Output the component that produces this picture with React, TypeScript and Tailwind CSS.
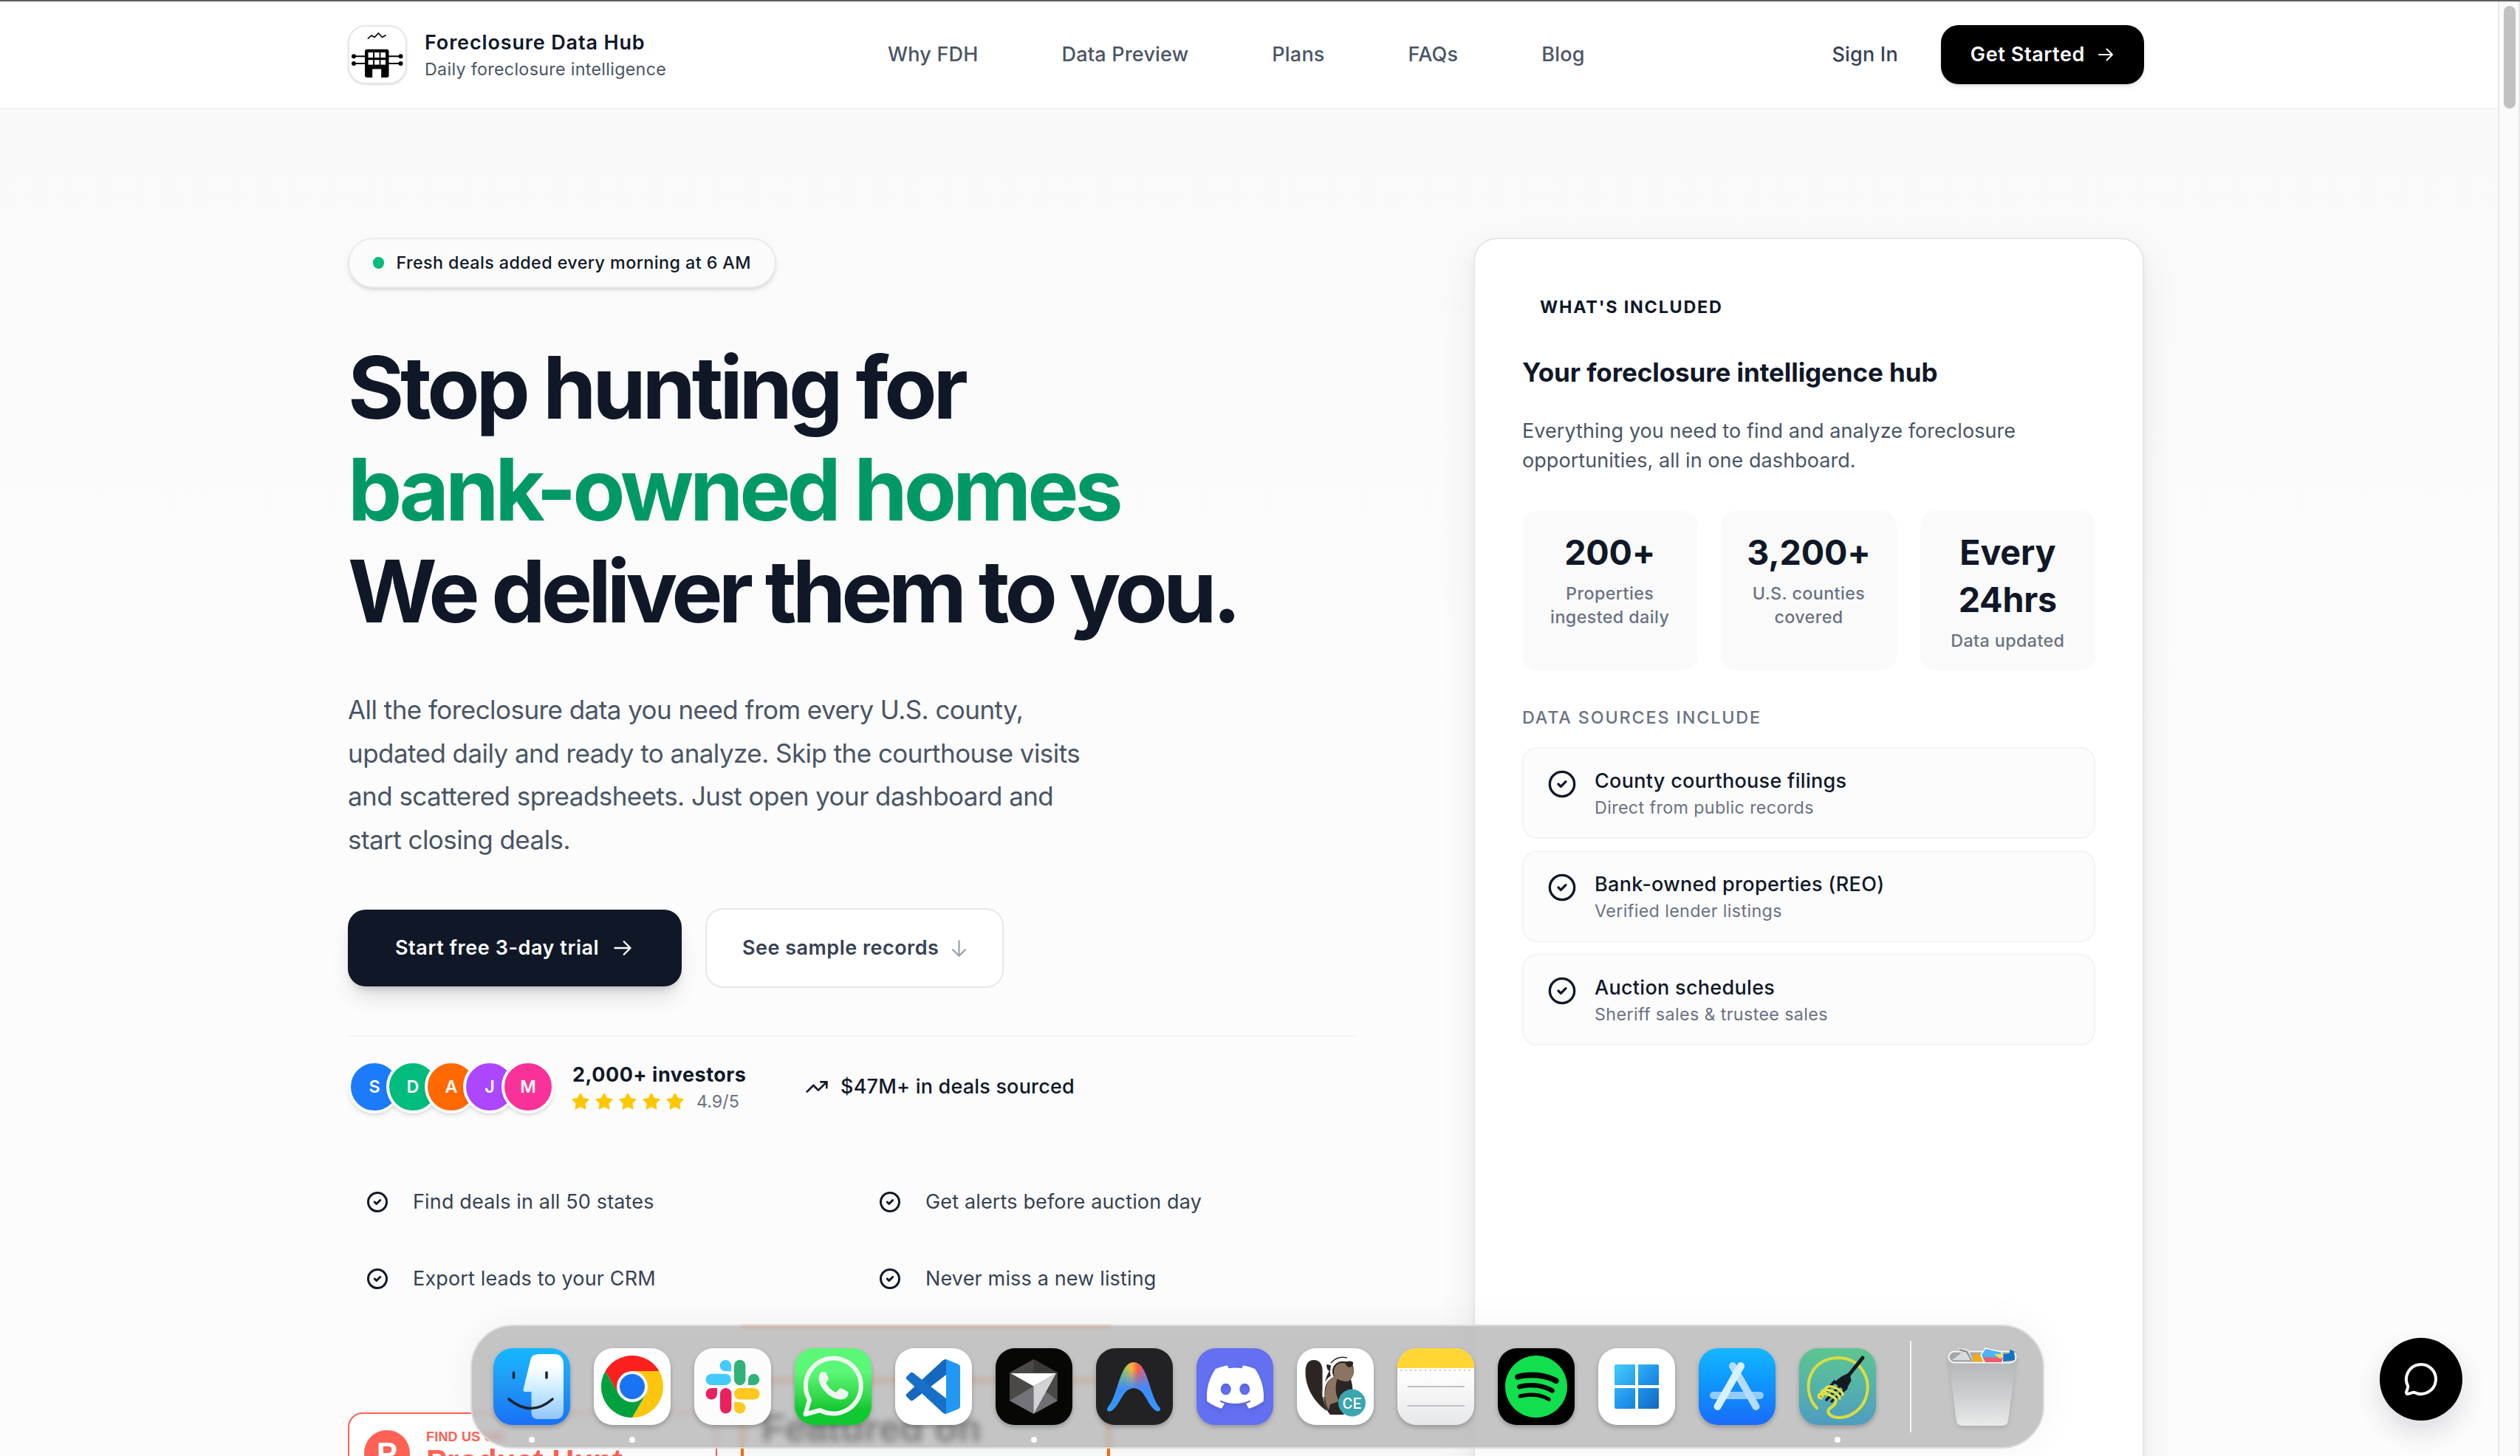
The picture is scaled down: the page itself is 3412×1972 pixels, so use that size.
import { ReactNode } from "react";
import { CircleCheck, MessageCircle, Star, TrendingUp } from "lucide-react";
import { SiDiscord, SiSpotify } from "react-icons/si";

const navLinks = ["Why FDH", "Data Preview", "Plans", "FAQs", "Blog"];

const investors = [
  { initial: "S", color: "bg-[#1b7bfb]" },
  { initial: "D", color: "bg-[#00bc7d]" },
  { initial: "A", color: "bg-[#ff6900]" },
  { initial: "J", color: "bg-[#ad46ff]" },
  { initial: "M", color: "bg-[#f93299]" },
];

const features = [
  "Find deals in all 50 states",
  "Get alerts before auction day",
  "Export leads to your CRM",
  "Never miss a new listing",
];

const stats = [
  { value: "200+", label: "Properties ingested daily" },
  { value: "3,200+", label: "U.S. counties covered" },
  { value: "Every 24hrs", label: "Data updated" },
];

const sources = [
  { title: "County courthouse filings", description: "Direct from public records" },
  { title: "Bank-owned properties (REO)", description: "Verified lender listings" },
  { title: "Auction schedules", description: "Sheriff sales & trustee sales" },
];

const Arrow = ({ className }: { className?: string }) => (
  <svg
    viewBox="0 0 24 24"
    fill="none"
    stroke="currentColor"
    strokeWidth="2"
    strokeLinecap="round"
    strokeLinejoin="round"
    className={className}
  >
    <path d="M13.5 4.5 21 12l-7.5 7.5M21 12H3" />
  </svg>
);

const Logo = () => (
  <div className="size-20 shrink-0 rounded-3xl border-2 border-gray-200 bg-white shadow-sm">
    <svg viewBox="2 2 76 76" className="size-full">
      <path d="M26.8 18.7 32 14l4 2.5L41.5 11l5 5.5 5.1-3" fill="none" stroke="#000" strokeWidth="1.6" />
      <path d="M8 42.3h62.5M8 52h62.5" stroke="#000" strokeWidth="2" />
      <circle cx="8" cy="42.3" r="3" />
      <circle cx="8" cy="52" r="3" />
      <circle cx="71.5" cy="42.3" r="3" />
      <circle cx="71.5" cy="52" r="3" />
      <rect x="23" y="32.7" width="32.5" height="38.3" rx="3" />
      <g fill="#fff">
        <rect x="27.5" y="37" width="6.6" height="7" />
        <rect x="36" y="37" width="6.6" height="7" />
        <rect x="44.4" y="37" width="6.6" height="7" />
        <rect x="27.5" y="47.2" width="6.6" height="6.4" />
        <rect x="36" y="47.2" width="6.6" height="6.4" />
        <rect x="44.4" y="47.2" width="6.6" height="6.4" />
        <rect x="33.2" y="59.5" width="12" height="11.5" />
      </g>
    </svg>
  </div>
);

const Header = () => (
  <header className="h-[146px] shrink-0 border-b-2 border-[#f0f0f1] bg-white pl-[471px]">
    <div className="flex h-full w-[2432px] items-center justify-between">
      <div className="flex w-[731px] items-center gap-6">
        <Logo />
        <div>
          <p className="text-[27px]/10 font-semibold tracking-[0.85px] text-gray-900">Foreclosure Data Hub</p>
          <p className="text-[23.3px]/8 tracking-[0.3px] text-[#4a5565]">Daily foreclosure intelligence</p>
        </div>
      </div>
      <nav className="flex flex-1 gap-[113px]">
        {navLinks.map((link) => (
          <a key={link} className="text-[27px]/10 font-medium tracking-[0.2px] text-[#4a5565]">
            {link}
          </a>
        ))}
      </nav>
      <div className="flex items-center gap-[58px]">
        <a className="text-[27px]/10 font-medium tracking-[0.2px] text-[#364153]">Sign In</a>
        <button className="flex h-20 items-center gap-4 rounded-3xl bg-black px-10 text-[27px] font-semibold tracking-[0.6px] text-white shadow-md">
          Get Started
          <Arrow className="size-6" />
        </button>
      </div>
    </div>
  </header>
);

const SocialProof = () => (
  <div className="mt-16 flex items-center border-t-2 border-gray-100 pt-8">
    <div className="flex -space-x-5">
      {investors.map(({ initial, color }) => (
        <div
          key={initial}
          className={`flex size-18 items-center justify-center rounded-full border-4 border-white text-[23.3px] font-semibold text-white shadow-md ${color}`}
        >
          {initial}
        </div>
      ))}
    </div>
    <div className="ml-6 w-[315px]">
      <p className="text-[27px]/10 font-bold tracking-[0.5px] text-gray-900">2,000+ investors</p>
      <div className="flex items-center">
        <div className="flex gap-1.5">
          {[1, 2, 3, 4, 5].map((n) => (
            <Star key={n} size={26} strokeWidth={1} className="-ml-0.5 mr-0.5 fill-[#fdc700] text-[#fdc700]" />
          ))}
        </div>
        <span className="ml-3.5 text-[23.3px]/8 text-[#6a7282]">4.9/5</span>
      </div>
    </div>
    <div className="flex items-center gap-4 text-gray-900">
      <TrendingUp size={32} />
      <span className="text-[27px]/10 font-medium tracking-[0.2px]">$47M+ in deals sourced</span>
    </div>
  </div>
);

const Badges = () => (
  <div className="mt-[100px] flex items-center gap-8 font-['Liberation_Sans']">
    <div className="flex h-[108px] w-[500px] items-start rounded-[20px] border-2 border-[#ff6154] bg-white px-5 text-[#ff6154]">
      <div className="mt-[22px] flex size-[62px] items-center justify-center rounded-full bg-[#ff6154] text-[42px] font-bold text-white">
        P
      </div>
      <div className="ml-[22px] mt-5">
        <p className="text-[18px]/[22px] font-bold tracking-[0.2px]">FIND US ON</p>
        <p className="text-[42px]/[44px] font-bold">Product Hunt</p>
      </div>
    </div>
    <div className="h-[198px] w-[500px] border-4 border-[#ff6900] bg-[#fbfcfc] pl-6 pt-9">
      <p className="text-[52px] font-bold leading-none text-black [text-shadow:0_0_3px_#000]">Featured on</p>
    </div>
  </div>
);

const Hero = () => (
  <div>
    <div className="flex h-[68px] w-[580px] items-center gap-4 rounded-full border-2 border-[#e8eaec] bg-[#fbfbfc] px-8 shadow-md">
      <span className="size-4 rounded-full bg-[#00bc7d]" />
      <span className="whitespace-nowrap text-[23.3px] font-medium tracking-[0.42px] text-gray-900">
        Fresh deals added every morning at 6 AM
      </span>
    </div>
    <h1 className="mt-[66px] whitespace-nowrap text-[116.5px]/[138px] font-bold text-gray-900">
      <span className="block tracking-[-5.25px]">Stop hunting for</span>
      <span className="block tracking-[-5.15px] text-[#009966]">bank-owned homes</span>
      <span className="block tracking-[-5.95px]">We deliver them to you.</span>
    </h1>
    <p className="mt-[62px] w-[1010px] text-[35px]/[58.5px] tracking-[-0.55px] text-[#4a5565]">
      All the foreclosure data you need from every U.S. county, updated daily and ready to analyze. Skip the courthouse
      visits and scattered spreadsheets. Just open your dashboard and start closing deals.
    </p>
    <div className="mt-16 flex items-center gap-8">
      <button className="flex h-26 w-[452px] items-center gap-[18px] rounded-3xl bg-gray-900 pl-16 text-[27px] font-semibold tracking-[0.55px] text-white shadow-[0_20px_30px_-6px_rgba(0,0,0,0.12),0_8px_12px_-6px_rgba(0,0,0,0.2)]">
        Start free 3-day trial
        <Arrow className="size-7" />
      </button>
      <button className="flex h-[108px] w-[404px] items-center gap-3.5 rounded-3xl border-2 border-gray-200 bg-white pl-12 text-[27px] font-semibold tracking-[0.48px] text-[#364153]">
        See sample records
        <Arrow className="size-[27px] rotate-90 text-[#99a1af]" />
      </button>
    </div>
    <SocialProof />
    <div className="mt-[84px] grid grid-cols-2 gap-x-6 gap-y-8">
      {features.map((feature) => (
        <div key={feature} className="flex h-18 items-center gap-[33px] px-[25px]">
          <CircleCheck size={30} strokeWidth={2.4} className="text-gray-900" />
          <span className="text-[27px] tracking-[0.15px] text-[#364153]">{feature}</span>
        </div>
      ))}
    </div>
    <Badges />
  </div>
);

const IncludedCard = () => (
  <div className="rounded-[32px] border-2 border-gray-200 bg-white p-16 shadow-[0_20px_50px_rgba(15,23,42,0.08),0_4px_10px_rgba(15,23,42,0.04)]">
    <p className="px-6 py-3 text-[23.3px]/8 font-bold tracking-[1.8px] text-gray-900">WHAT'S INCLUDED</p>
    <h2 className="mt-8 text-[35px]/14 font-bold tracking-[-0.08px] text-gray-900">
      Your foreclosure intelligence hub
    </h2>
    <p className="mt-8 w-[720px] text-[27px]/10 tracking-[0.06px] text-[#4a5565]">
      Everything you need to find and analyze foreclosure opportunities, all in one dashboard.
    </p>
    <div className="mt-12 grid grid-cols-3 gap-8">
      {stats.map(({ value, label }) => (
        <div key={label} className="h-54 rounded-[20px] bg-[#fafafa] px-7 py-6 text-center">
          <p className="text-[46.6px]/16 font-bold tracking-[-0.2px] text-gray-900">{value}</p>
          <p className="mt-2 text-[23.3px]/8 font-medium tracking-[0.4px] text-[#6a7282]">{label}</p>
        </div>
      ))}
    </div>
    <p className="mt-12 text-[23.3px]/8 font-medium tracking-[1.88px] text-[#6a7282]">DATA SOURCES INCLUDE</p>
    <div className="mt-6 flex flex-col gap-4">
      {sources.map(({ title, description }) => (
        <div key={title} className="flex h-31 items-start gap-6 rounded-[20px] border-2 border-gray-100 bg-[#fcfcfd] px-8 pt-6">
          <CircleCheck size={40} className="mt-1 text-gray-900" />
          <div>
            <p className="text-[27px]/10 font-medium tracking-[0.3px] text-gray-900">{title}</p>
            <p className="text-[23.3px]/8 tracking-[0.36px] text-[#6a7282]">{description}</p>
          </div>
        </div>
      ))}
    </div>
  </div>
);

const AppIcon = ({ children, fill, running }: { children: ReactNode; fill: string; running?: boolean }) => (
  <div className="relative size-26 shrink-0">
    <div
      className={`flex size-full items-center justify-center overflow-hidden rounded-[26px] shadow-[0_3px_6px_rgba(0,0,0,0.25)] ${fill}`}
    >
      {children}
    </div>
    {running && <span className="absolute -bottom-6 left-12 size-2 rounded-full bg-white" />}
  </div>
);

const Finder = () => (
  <svg viewBox="0 0 104 104" className="size-full">
    <defs>
      <linearGradient id="finder-face" x1="0" y1="0" x2="0" y2="1">
        <stop offset="0.2" stopColor="#fff" />
        <stop offset="0.6" stopColor="#c3e9ff" />
        <stop offset="1" stopColor="#93c5fb" />
      </linearGradient>
    </defs>
    <path
      d="M63 8h20c8 0 12 6 12 14v62c0 8-4 12-10 12H60c-6 0-8.500-4-8.500-9V59H43c-2 0-3-1-2.500-3l10-41c1.500-5 5-7 12.500-7Z"
      fill="url(#finder-face)"
    />
    <path d="M27.500 33v7M72 33v7M21 69q30 25 59 0" fill="none" stroke="#1f2430" strokeWidth="3.600" strokeLinecap="round" />
  </svg>
);

const Chrome = () => (
  <svg viewBox="0 0 104 104" className="size-full">
    <path d="M15.600 31A42 42 0 0 1 88.400 31H52L33.800 62.500Z" fill="#fb1f1d" />
    <path d="M88.400 31A42 42 0 0 1 52 94l18.200-31.500L52 31Z" fill="#fcc60e" />
    <path d="M52 94A42 42 0 0 1 15.600 31l18.200 31.500h36.400Z" fill="#00a03f" />
    <circle cx="52" cy="52" r="21" fill="#f4f7f6" />
    <circle cx="52" cy="52" r="17" fill="#1a73f3" />
  </svg>
);

const Slack = () => (
  <svg viewBox="0 0 104 104" className="size-full">
    <g fill="#44caff">
      <rect x="15.500" y="34.700" width="34.500" height="15.400" rx="7.700" />
      <path d="M50 31.300h-7.500a7.700 7.700 0 1 1 7.500-7.700Z" />
    </g>
    <g fill="#32b27b">
      <rect x="54" y="15.700" width="15.400" height="34.500" rx="7.700" />
      <path d="M73 50.100v-7.700a7.700 7.700 0 1 1 7.700 7.700Z" />
    </g>
    <g fill="#ffc81e">
      <rect x="54" y="54" width="34.500" height="15.400" rx="7.700" />
      <path d="M54 73h7.700a7.700 7.700 0 1 1-7.700 7.700Z" />
    </g>
    <g fill="#e9215f">
      <rect x="35" y="54" width="15.400" height="34.500" rx="7.700" />
      <path d="M31 54v7.700a7.700 7.700 0 1 1-7.700-7.700Z" />
    </g>
  </svg>
);

const WhatsApp = () => (
  <svg viewBox="0 0 104 104" className="size-full">
    <path
      d="M14.500 89.500l5.500-19.500A37.500 37.500 0 1 1 34.500 84Z"
      fill="none"
      stroke="#f0f7f1"
      strokeWidth="6"
      strokeLinejoin="round"
    />
    <path
      d="M39 32c-3-.5-6.500 3-6.500 8.500C33 55 50 69.500 62 69.500c6 0 10.500-3 10.500-8.500 0-1.500-.5-2-2-3l-7-3.500c-1.500-.7-2.500-.3-3.500 1l-3 3.500c-1 1-2 .7-3 0-5-2.500-8.500-6.500-11-11-.5-1-.5-1.700.3-2.600l2-2.400c.7-1 .7-2 .3-3l-3-6.500c-.7-1.200-1.600-1.500-3.600-1.500Z"
      fill="#eef6ef"
    />
  </svg>
);

const VsCode = () => (
  <svg viewBox="0 0 104 104" className="size-full">
    <path
      d="M69 15v21L24.500 70.500c-1.500 1-3 1-4 0l-5-5c-1-1-1-2.500 0-3.500L64 17c2-1.500 3.500-2 5-2Z"
      fill="#1468bd"
    />
    <path
      d="M69 89V68L24.500 33.500c-1.500-1-3-1-4 0l-5 5c-1 1-1 2.500 0 3.500L64 87c2 1.500 3.500 2 5 2Z"
      fill="#176fc8"
    />
    <path d="m69 15 16 6.500c2 1 3 2 3 4v53c0 2-1 3-3 4L69 89Z" fill="#2198f3" />
  </svg>
);

const Cursor = () => (
  <svg viewBox="0 0 104 104" className="size-full">
    <path d="m51.500 15 32.300 18v38L51.500 89 19 71V33Z" fill="#4a4947" />
    <path d="m51.500 15 32.300 18H51.500Z" fill="#3a3937" />
    <path d="M19 71 51.500 51.500V89Z" fill="#73747a" />
    <path d="M51.500 89 83.800 71 67 58Z" fill="#706f75" />
    <path d="M20.500 34H82L51.500 51.500Z" fill="#fff" />
    <path d="M82 34 51.500 89V51.500Z" fill="#d3d3d5" />
  </svg>
);

const Antigravity = () => (
  <svg viewBox="0 0 104 104" className="size-full">
    <defs>
      <linearGradient id="arch-warm" x1="0.3" x2="0.7">
        <stop offset="0" stopColor="#7bc86c" />
        <stop offset="0.4" stopColor="#f5b43c" />
        <stop offset="0.700" stopColor="#ff5a46" />
        <stop offset="1" stopColor="#b36aa8" />
      </linearGradient>
      <linearGradient id="arch-cool" x1="0" y1="0" x2="0" y2="1">
        <stop offset="0.15" stopColor="#3c8cff" stopOpacity="0" />
        <stop offset="0.55" stopColor="#3c8cff" />
        <stop offset="1" stopColor="#2f9bff" />
      </linearGradient>
    </defs>
    {["url(#arch-warm)", "url(#arch-cool)"].map((paint) => (
      <path
        key={paint}
        d="M15.500 81C31 64 31 19 51 19s20 45 35.500 62c2 4-3 6-7 2.500C68 74 66 54 51 54S34 74 22.500 83.500c-4 3.500-9 1.500-7-2.500Z"
        fill={paint}
      />
    ))}
  </svg>
);

const Beaver = () => (
  <svg viewBox="0 0 104 104" className="size-full">
    <path d="M11.500 32c0-12 5-16 11.500-16s11 4 11.500 13c.5 12-1 32 2 43 1 5 3 9 4 13C22 72 11.500 52 11.500 32Z" fill="#2b2624" />
    <path d="M45 90c-8-9-9-20-8.500-32C37 44 41 33 49 24c6-8 18-8 26-2 4 8 2 14-2 20 2 8 3 12 2 20l-12 28Z" fill="#2b2624" />
    <path d="M43 84c-6-10-6-24-3-33 2-7 5-11 10-13l5 2c-4 13-3 22 2 32l-12 4Z" fill="#8c7462" />
    <path d="M50 36c-1-9 3-16 12-16s15 4 15 10-3 13-8 15c-7 0-16-2-19-9Z" fill="#8c7462" />
    <path d="M36 66c-1-16 4-24 12-28-5-10 2-22 18-24" fill="none" stroke="#fff" strokeWidth="3" />
    <path d="M46 20c6-7 14-9 22-7" fill="none" stroke="#2b2624" strokeWidth="1.500" />
    <path d="M65 19c4-2 8-2 11 0 1 4-3 7-5 7s-5-3-6-7ZM40 22l6 1-1 8c-3 0-5-4-5-9Z" fill="#2b2624" />
    <circle cx="74.500" cy="74" r="18.500" fill="#3ba6b1" />
    <text x="74.500" y="81.500" fill="#fff" fontFamily="Roboto" fontWeight="500" fontSize="21" textAnchor="middle">
      CE
    </text>
  </svg>
);

const Notes = () => (
  <svg viewBox="0 0 104 104" className="size-full">
    <rect width="104" height="27" fill="#ffd633" />
    <path d="M5 30h96" stroke="#b9b9b9" strokeWidth="2" strokeLinecap="round" strokeDasharray="0.1 6.5" />
    <path d="M13.500 52h77.500M13.500 78h77.500" stroke="#c1c1c2" strokeWidth="2" />
  </svg>
);

const Windows = () => (
  <svg viewBox="0 0 104 104" className="size-full">
    <defs>
      <linearGradient id="panes" gradientUnits="userSpaceOnUse" x1="22" y1="22" x2="82" y2="82">
        <stop offset="0" stopColor="#46cdfb" />
        <stop offset="0.55" stopColor="#1e93ec" />
        <stop offset="1" stopColor="#1266bf" />
      </linearGradient>
    </defs>
    <path d="M24 22h26v28H22V24q0-2 2-2ZM54 22h26q2 0 2 2v26H54ZM22 54h28v28H24q-2 0-2-2ZM54 54h28v26q0 2-2 2H54Z" fill="url(#panes)" />
  </svg>
);

const AppStore = () => (
  <svg viewBox="0 0 104 104" className="size-full">
    <g fill="none" strokeWidth="10" strokeLinecap="round">
      <path d="M20 64h63" stroke="#93cbff" />
      <path d="m46 24 31.500 55" stroke="#b5dcff" />
      <path d="M57 24 25.500 79" stroke="#d9f1ff" />
    </g>
  </svg>
);

const ForkApp = () => (
  <svg viewBox="0 0 104 104" className="size-full">
    <g fill="none" strokeLinecap="round" strokeLinejoin="round">
      <path
        d="M24 81C2 58 12 14 52 13c32 0 44 28 40 48C88 82 70 94 54 94c-10 0-17-6-14-11 4-5 11-5 9-14"
        stroke="#d8dd3f"
        strokeWidth="4"
      />
      <path d="M86 13 66 38" stroke="#16191f" strokeWidth="5" />
      <path d="M48 45 30 66M56 50 37 70M64 54 44 72" stroke="#16191f" strokeWidth="3.500" />
      <path d="M68 34l2 10-8 14c-4-5-9-8-15-11l10-8Z" fill="#16191f" stroke="#16191f" />
      <path
        d="M36 54c6-6 22 2 23 9M31 58c7-5 23 3 24 10M27 63c7-4 22 2 23 8M36 54q-3 4 1 7M31 58q-3 4 1 7M27 63q-2 4 3 5"
        stroke="#e0e04a"
        strokeWidth="3.600"
      />
    </g>
  </svg>
);

const Trash = () => (
  <svg viewBox="0 0 94 108" className="ml-[49px] h-[108px] w-[94px] drop-shadow-md">
    <defs>
      <linearGradient id="bin" x1="0" y1="0" x2="0" y2="1">
        <stop offset="0" stopColor="#b3b5b8" />
        <stop offset="0.600" stopColor="#d0d1d3" />
        <stop offset="1" stopColor="#e9eaea" />
      </linearGradient>
    </defs>
    <path d="M1 16 12 100q1 7 8 7h54q7 0 8-7l11-84Z" fill="url(#bin)" />
    <rect x="1.500" y="6.500" width="91" height="15" rx="7.500" fill="#a4a6a9" stroke="#f6f7f7" strokeWidth="2" />
    <path d="m13 1 16 2 5 15H6l12-9Z" fill="#d9dadb" />
    <path d="m16 4 10 3 6 11" fill="none" stroke="#77797c" strokeWidth="1.500" />
    <path d="m36 9 8 2 5 9H33Z" fill="#f5ab12" />
    <path d="m51 2 22 5 2 13H49l-4-9Z" fill="#4db5f5" stroke="#fff" strokeWidth="1.500" />
    <path d="m49 14 26 1-2 6H51Z" fill="#ef5a6e" />
    <path d="M63 10h11l-2 7Z" fill="#f7dc4e" />
    <path d="m76 10 8-1V4l6 2 1 12-16 2Z" fill="#1272c4" />
  </svg>
);

const Dock = () => (
  <div className="absolute left-[637px] top-[1794px] flex h-[168px] w-[2131px] items-center gap-8 rounded-[58px] border-2 border-[#dcdddd] bg-[#b1b1b1]/75 pl-[29px] shadow-[0_0_50px_rgba(0,0,0,0.05)] backdrop-blur-[5px]">
    {/* orange glow caught by the glass rim */}
    <span className="absolute left-[365px] top-0 h-[3px] w-[500px] bg-[#cfab9e] blur-[2px]" />
    <AppIcon fill="bg-linear-to-b from-[#14b8ff] via-[#2196f5] to-[#1a70f8]" running>
      <Finder />
    </AppIcon>
    <AppIcon fill="bg-white" running>
      <Chrome />
    </AppIcon>
    <AppIcon fill="bg-[#fcfcfc]">
      <Slack />
    </AppIcon>
    <AppIcon fill="bg-linear-to-b from-[#5bf877] from-30% to-[#10c830] to-80%">
      <WhatsApp />
    </AppIcon>
    <AppIcon fill="bg-white">
      <VsCode />
    </AppIcon>
    <AppIcon fill="bg-[#070706]" running>
      <Cursor />
    </AppIcon>
    <AppIcon fill="bg-[#222225]">
      <Antigravity />
    </AppIcon>
    <AppIcon fill="bg-[#6370f2]">
      <SiDiscord size={77} color="#fff" className="drop-shadow-md" />
    </AppIcon>
    <AppIcon fill="bg-white">
      <Beaver />
    </AppIcon>
    <AppIcon fill="bg-linear-to-b from-white from-30% to-[#e6e7e9]">
      <Notes />
    </AppIcon>
    <AppIcon fill="bg-black">
      <SiSpotify size={84} color="#12df4e" />
    </AppIcon>
    <AppIcon fill="bg-white">
      <Windows />
    </AppIcon>
    <AppIcon fill="bg-linear-to-b from-[#16b7ff] to-[#1a6bf9]">
      <AppStore />
    </AppIcon>
    <AppIcon fill="bg-linear-to-b from-[#5dc68f] to-[#4f9cc0]" running>
      <ForkApp />
    </AppIcon>
    <div className="ml-[14px] flex items-center">
      <span className="h-31 w-0.5 bg-[#f4f4f4]" />
      <Trash />
    </div>
  </div>
);

export default function App() {
  return (
    <div className="relative flex h-[1972px] w-[3412px] flex-col overflow-hidden font-['Inter',sans-serif]">
      <div className="h-0.5 shrink-0 bg-[#5f5e60]" />
      <div className="flex min-h-0 flex-1">
        <div className="flex w-[3382px] flex-col overflow-hidden bg-linear-to-b from-[#f9f9f9] to-[#fcfcfc] to-50%">
          <Header />
          <main className="pl-[471px] pt-[174px]">
            <div className="grid w-[2432px] grid-cols-[1364px_908px] gap-40">
              <Hero />
              <IncludedCard />
            </div>
          </main>
        </div>
        <div className="w-[30px] border-x-2 border-[#e7e7e7] bg-[#fafafa] pl-1.5 pt-1.5">
          <div className="h-[139px] w-4 rounded-full bg-[#c1c1c2]" />
        </div>
      </div>
      <button className="absolute left-[3222px] top-[1812px] flex size-28 items-center justify-center rounded-full bg-black text-white shadow-[0_16px_36px_rgba(15,23,42,0.14)]">
        <MessageCircle size={48} />
      </button>
      <Dock />
    </div>
  );
}
